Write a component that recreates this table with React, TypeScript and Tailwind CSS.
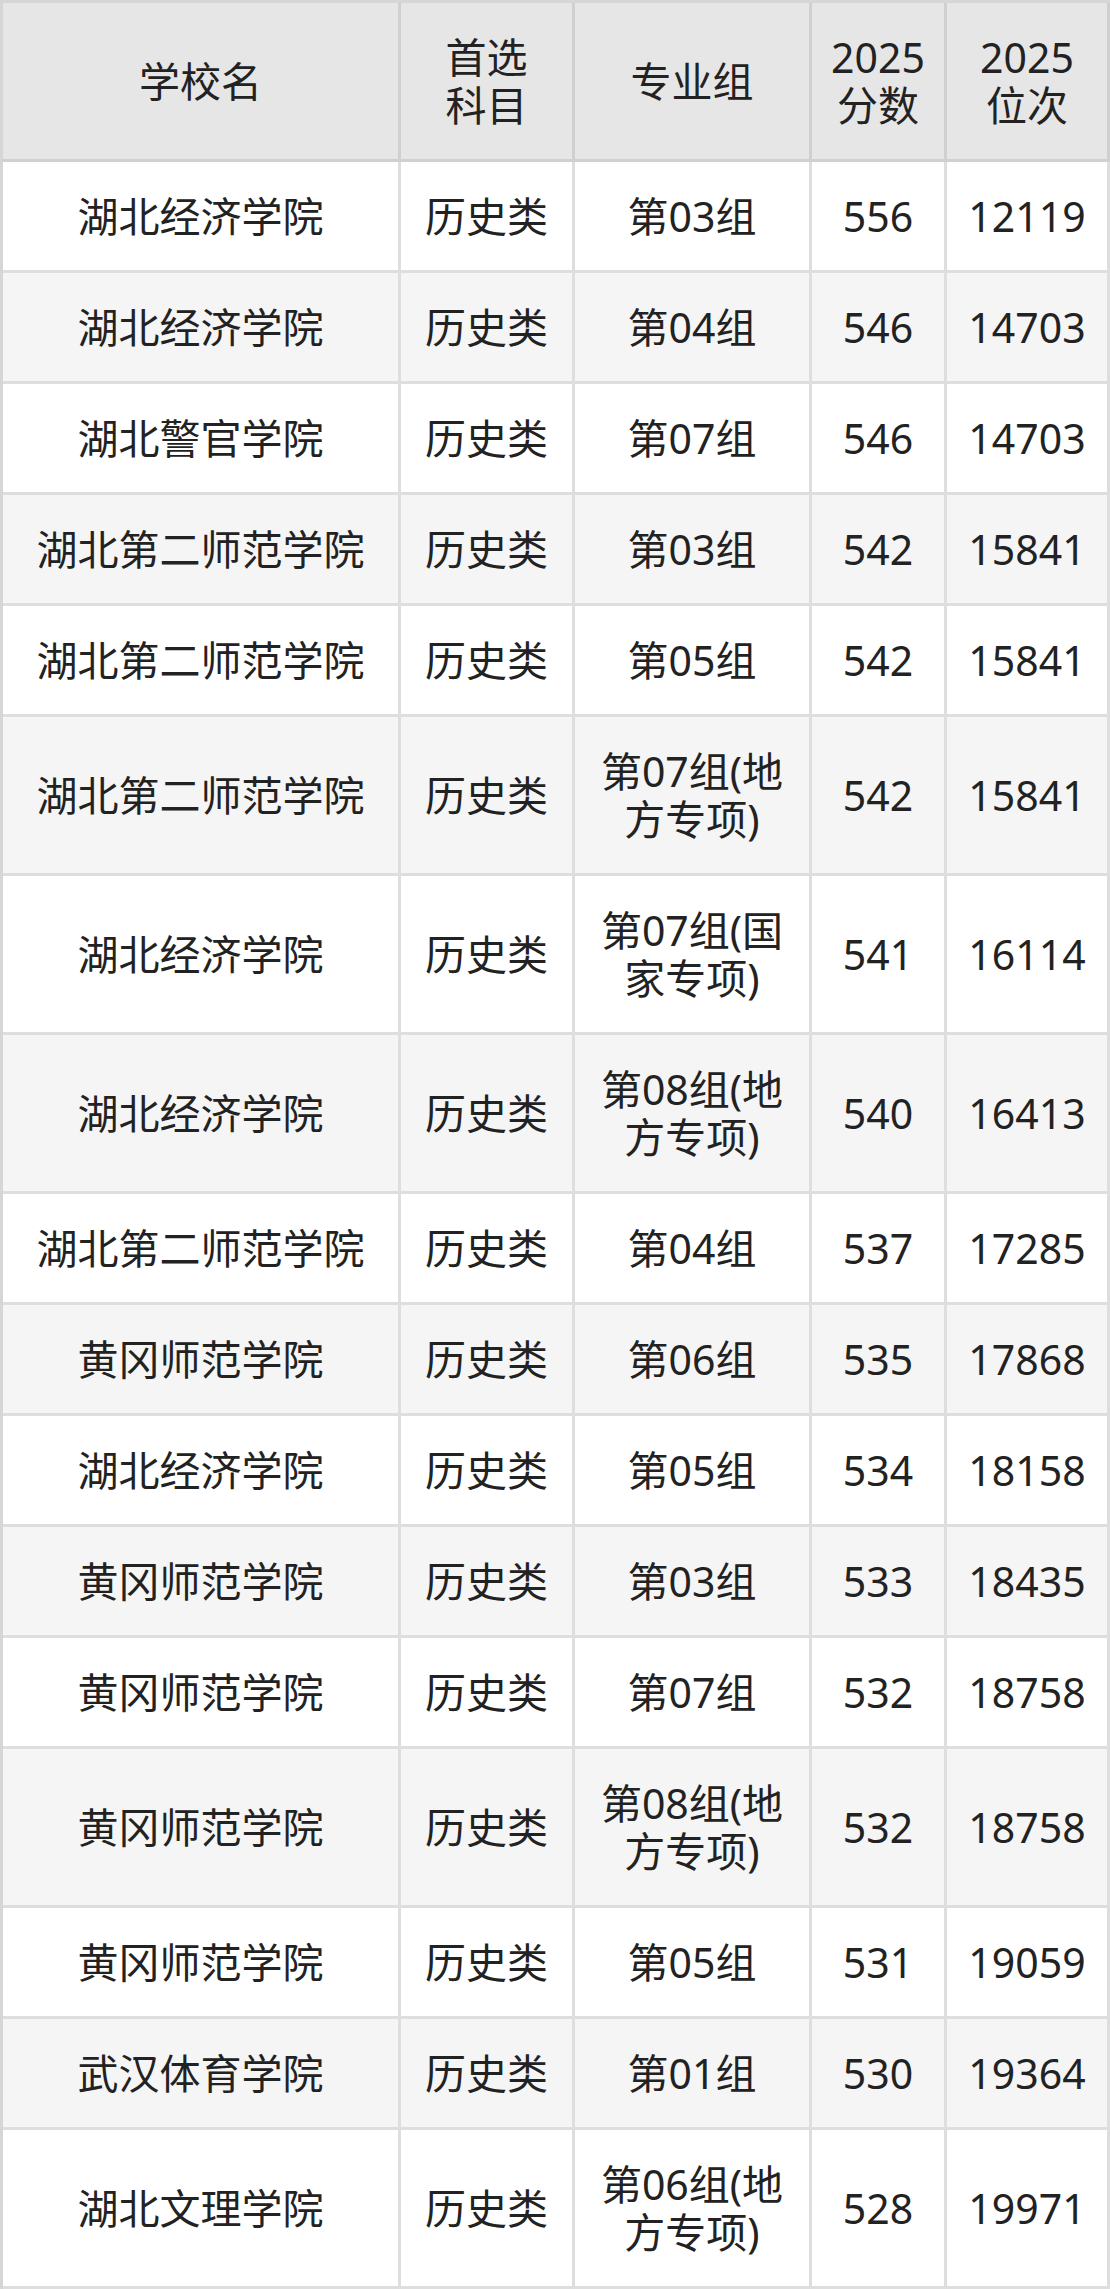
import React from 'react';

const rows = [
  { school: '湖北经济学院', subject: '历史类', group: '第03组', score: '556', rank: '12119' },
  { school: '湖北经济学院', subject: '历史类', group: '第04组', score: '546', rank: '14703' },
  { school: '湖北警官学院', subject: '历史类', group: '第07组', score: '546', rank: '14703' },
  { school: '湖北第二师范学院', subject: '历史类', group: '第03组', score: '542', rank: '15841' },
  { school: '湖北第二师范学院', subject: '历史类', group: '第05组', score: '542', rank: '15841' },
  { school: '湖北第二师范学院', subject: '历史类', group: '第07组(地\n方专项)', score: '542', rank: '15841' },
  { school: '湖北经济学院', subject: '历史类', group: '第07组(国\n家专项)', score: '541', rank: '16114' },
  { school: '湖北经济学院', subject: '历史类', group: '第08组(地\n方专项)', score: '540', rank: '16413' },
  { school: '湖北第二师范学院', subject: '历史类', group: '第04组', score: '537', rank: '17285' },
  { school: '黄冈师范学院', subject: '历史类', group: '第06组', score: '535', rank: '17868' },
  { school: '湖北经济学院', subject: '历史类', group: '第05组', score: '534', rank: '18158' },
  { school: '黄冈师范学院', subject: '历史类', group: '第03组', score: '533', rank: '18435' },
  { school: '黄冈师范学院', subject: '历史类', group: '第07组', score: '532', rank: '18758' },
  { school: '黄冈师范学院', subject: '历史类', group: '第08组(地\n方专项)', score: '532', rank: '18758' },
  { school: '黄冈师范学院', subject: '历史类', group: '第05组', score: '531', rank: '19059' },
  { school: '武汉体育学院', subject: '历史类', group: '第01组', score: '530', rank: '19364' },
  { school: '湖北文理学院', subject: '历史类', group: '第06组(地\n方专项)', score: '528', rank: '19971' },
];

const headers = ['学校名', '首选\n科目', '专业组', '2025\n分数', '2025\n位次'];

const cellBase =
  'flex items-center justify-center text-center whitespace-pre-line px-1 py-[30px] border-r-[3px] border-b-[3px]';

export default function App() {
  return (
    <div
      className="w-[1110px] bg-white text-[#222222] text-[41px] leading-[48px]"
      style={{ fontFamily: '"Noto Sans", "Noto Sans CJK SC", sans-serif' }}
    >
      <div className="grid grid-cols-[398px_174px_237px_135px_163px] ml-0 border-l-[3px] border-t-[3px] border-[#d6d6d6] w-[1110px] [&>div]:border-[#dedede]">
        {headers.map((h, i) => (
          <div key={'h' + i} className={`${cellBase} bg-[#e6e6e6] !border-[#d0d0d0]`}>
            {h}
          </div>
        ))}
        {rows.map((r, i) => {
          const bg = i % 2 === 0 ? 'bg-white' : 'bg-[#f5f5f5]';
          return (
            <React.Fragment key={i}>
              <div className={`${cellBase} ${bg}`}>{r.school}</div>
              <div className={`${cellBase} ${bg}`}>{r.subject}</div>
              <div className={`${cellBase} ${bg}`}>{r.group}</div>
              <div className={`${cellBase} ${bg}`}>{r.score}</div>
              <div className={`${cellBase} ${bg}`}>{r.rank}</div>
            </React.Fragment>
          );
        })}
      </div>
    </div>
  );
}
